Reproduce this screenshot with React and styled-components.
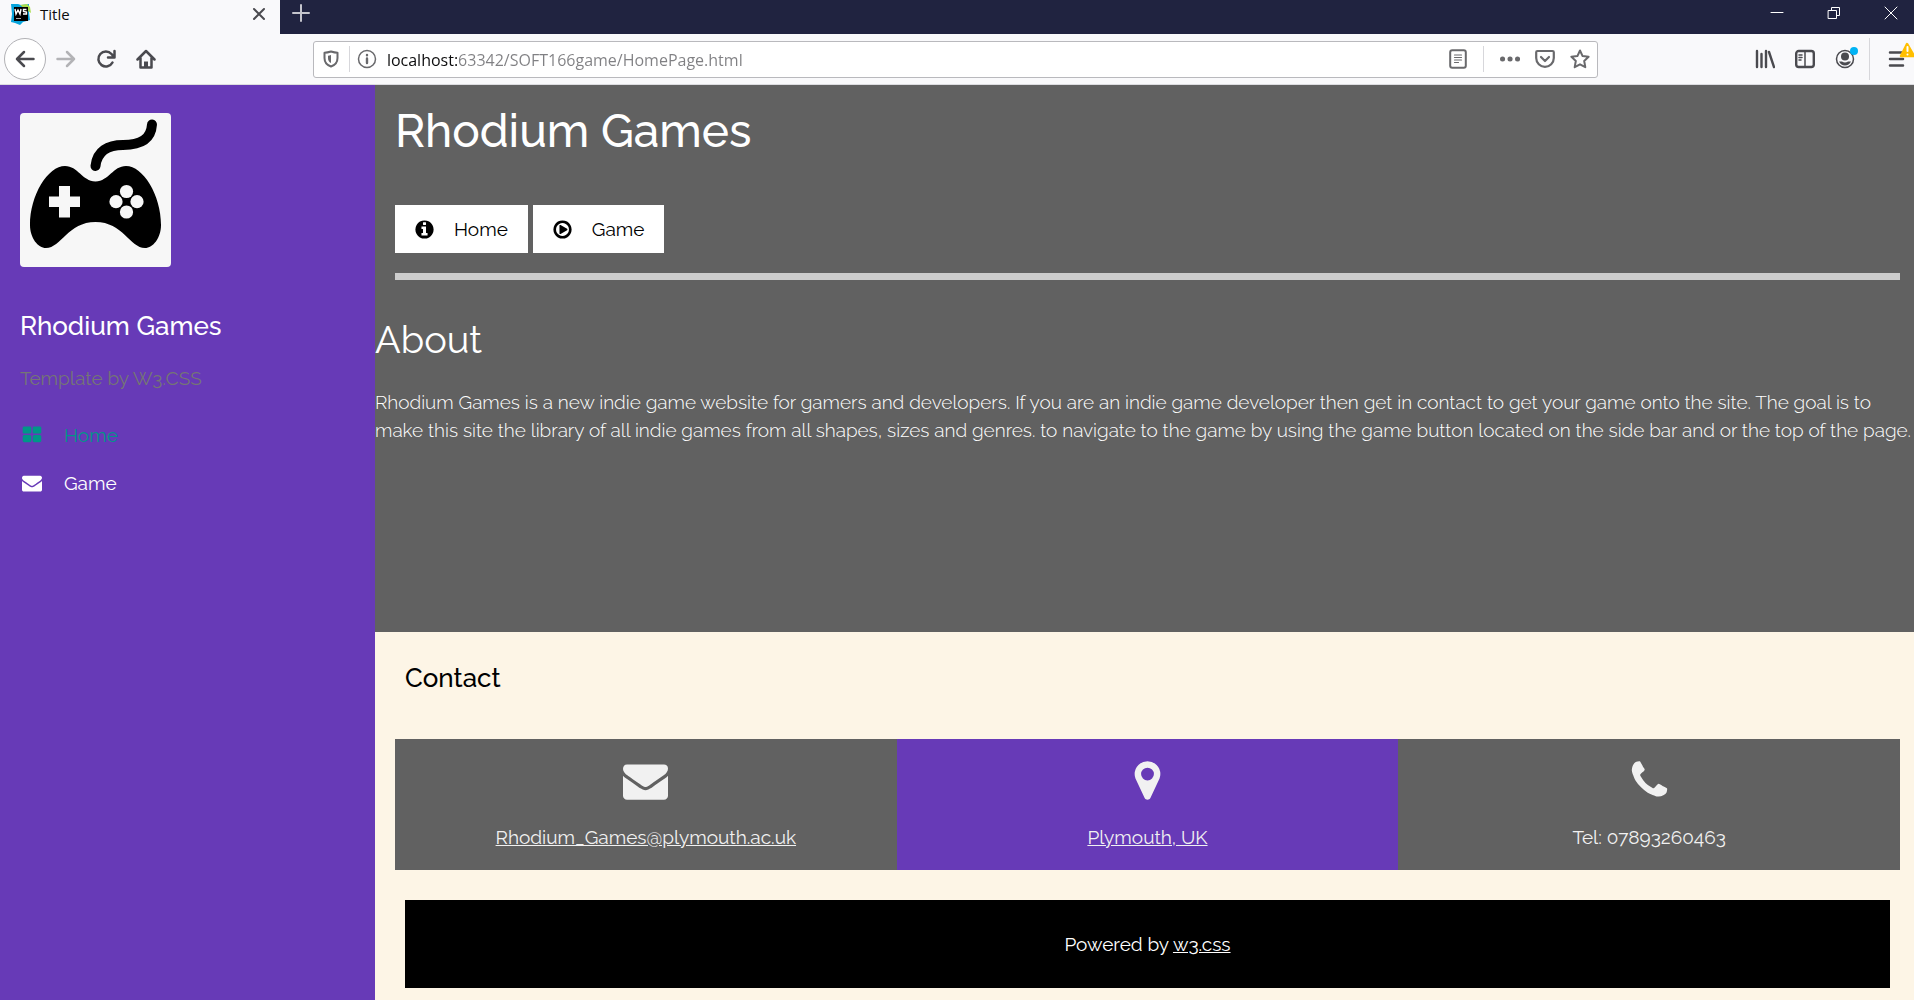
import React from 'react';
import styled, { createGlobalStyle } from 'styled-components';

const colors = {
  purple: '#673ab7',
  grey: '#616161',
  cream: '#fdf5e6',
  frame: '#202340',
  toolbar: '#f9f9fb',
  glyph: '#4a4a4f',
};

const GlobalStyle = createGlobalStyle`
  *, *::before, *::after { box-sizing: border-box; }
  body {
    margin: 0;
    font-family: Raleway, Lato, "Open Sans", sans-serif;
    font-size: 19px;
    font-variant-numeric: oldstyle-nums;
    line-height: 28px;
    color: #000;
    background: ${colors.cream};
  }
  h1, h2, h3, p { margin: 0; }
  svg { display: block; flex: none; }
`;

/* ---------- browser frame ---------- */

const Window = styled.div`
  display: flex;
  flex-direction: column;
  min-height: 100vh;
`;

const TitleBar = styled.header`
  display: flex;
  height: 34px;
  background: ${colors.frame};
  font-family: "Open Sans", "Noto Sans", sans-serif;
`;

const Tab = styled.div`
  display: flex;
  align-items: center;
  gap: 8px;
  width: 280px;
  padding: 0 10px 6px;
  background: ${colors.toolbar};
  color: #0c0c0d;
  font-size: 15px;
  line-height: 20px;
`;

const TabTitle = styled.span`
  flex: 1;
`;

const FrameButton = styled.button`
  display: flex;
  align-items: center;
  justify-content: center;
  width: ${(p) => p.$width}px;
  height: 26px;
  padding: 0;
  border: 0;
  background: none;
  color: ${(p) => p.$color || '#fff'};
`;

const WindowControls = styled.div`
  display: flex;
  margin-left: auto;
  gap: 11px;
`;

const NavBar = styled.nav`
  display: grid;
  grid-template-columns: auto 4fr 35fr 4fr auto;
  align-items: center;
  height: 51px;
  padding-left: 4px;
  background: ${colors.toolbar};
  border-bottom: 1px solid #dcdce0;
  font-family: "Open Sans", "Noto Sans", sans-serif;
`;

const ToolGroup = styled.div`
  display: flex;
  align-items: center;
`;

const ToolButton = styled.button`
  display: flex;
  align-items: center;
  justify-content: center;
  width: ${(p) => p.$width || 40}px;
  height: ${(p) => (p.$round ? 42 : 36)}px;
  padding: 0;
  border: ${(p) => (p.$round ? '1px solid #b1b1b5' : '0')};
  border-radius: ${(p) => (p.$round ? '50%' : '2px')};
  background: ${(p) => (p.$round ? '#fff' : 'none')};
  color: ${(p) => (p.$dim ? '#b3b3b6' : p.$soft ? '#69696c' : colors.glyph)};
`;

const Divider = styled.span`
  width: 1px;
  height: ${(p) => p.$height}px;
  margin: 0 ${(p) => p.$space || 0}px;
  background: #d7d7db;
`;

const AddressBar = styled.div`
  grid-column: 3;
  display: flex;
  align-items: center;
  height: 37px;
  border: 1px solid #b9b9bd;
  border-radius: 3px;
  background: #fff;
`;

const AddressInput = styled.input`
  flex: 1;
  min-width: 0;
  height: 32px;
  padding: 2px 2px 0;
  border: 0;
  outline: 0;
  font-family: inherit;
  font-size: 16px;
  color: #737373;
  background: linear-gradient(90deg, #0c0c0d 72px, #808083 72px);
  background-clip: text;
  -webkit-background-clip: text;
  -webkit-text-fill-color: transparent;
`;

const NavEnd = styled(ToolGroup)`
  grid-column: 5;
`;

/* ---------- page ---------- */

const Page = styled.div`
  flex: 1;
  display: grid;
  grid-template-columns: 375px 1fr;
`;

const Sidebar = styled.aside`
  padding: 28px 0;
  background: ${colors.purple};
  color: #fff;
`;

const Brand = styled.div`
  padding: 0 20px;
`;

const Logo = styled.svg`
  border-radius: 4px;
`;

const BrandName = styled.h3`
  margin-top: 40px;
  font-size: 26px;
  font-weight: 500;
  line-height: 38px;
`;

const Credit = styled.p`
  margin: 19px 0;
  color: #757575;
`;

const SideLink = styled.a`
  display: flex;
  align-items: center;
  gap: 22px;
  padding: 10px 22px;
  color: ${(p) => (p.$active ? '#009688' : '#fff')};
  text-decoration: none;
`;

const Main = styled.main`
  background: ${colors.cream};
`;

const Intro = styled.section`
  padding: 12px 0 188px;
  background: ${colors.grey};
  color: #fff;
`;

const PageHeader = styled.header`
  padding: 0 14px 0 20px;
`;

const PageTitle = styled.h1`
  font-size: 46px;
  font-weight: 500;
  line-height: 68px;
`;

const ButtonRow = styled.div`
  display: flex;
  gap: 5px;
  margin-top: 40px;
  padding-bottom: 20px;
  border-bottom: 7px solid #ccc;
  box-sizing: content-box;
`;

const PageButton = styled.button`
  display: flex;
  align-items: center;
  gap: 20px;
  padding: 10px 20px;
  border: 0;
  background: #fff;
  color: #000;
  font: inherit;
`;

const AboutTitle = styled.h2`
  margin-top: 32px;
  font-size: 38px;
  font-weight: 400;
  line-height: 56px;
`;

const AboutText = styled.p`
  margin-top: 20px;
  font-weight: 350;
`;

const ContactSection = styled.section`
  padding: 27px 14px 12px 20px;
`;

const ContactTitle = styled.h3`
  padding-left: 10px;
  font-size: 26px;
  font-weight: 500;
  line-height: 38px;
`;

const Cards = styled.div`
  display: grid;
  grid-template-columns: repeat(3, 1fr);
  margin-top: 42px;
`;

const Card = styled.div`
  display: flex;
  flex-direction: column;
  align-items: center;
  gap: 20px;
  padding: 19px;
  background: ${(p) => (p.$accent ? colors.purple : colors.grey)};
  color: #f1f1f1;
`;

const TextLink = styled.a`
  color: inherit;
`;

const PageFooter = styled.footer`
  margin: 30px 10px 0;
  padding: 30px 20px;
  background: #000;
  color: #fff;
  text-align: center;
`;

/* ---------- icons ---------- */

const ring =
  'm640 416q0 209-103 385.5t-279.5 279.5-385.5 103-385.5-103-279.5-279.5-103-385.5 103-385.5 279.5-279.5 385.5-103 385.5 103 279.5 279.5 103 385.5z';

const tile = (x, y) =>
  `M${x} ${y}v384q0 52-38 90t-90 38h-512q-52 0-90-38t-38-90v-384q0-52 38-90t90-38h512q52 0 90 38t38 90z`;

const glyphs = {
  envelope:
    'M1792 710v794q0 66-47 113t-113 47h-1472q-66 0-113-47t-47-113v-794q44 49 101 87 362 246 497 345 57 42 92.5 65.5t94.5 48 110 24.5h2q51 0 110-24.5t94.5-48 92.5-65.5q170-123 498-345 57-39 100-87zm0-294q0 79-49 151t-122 123q-376 261-468 325-10 7-42.5 31t-54 38.5-52 32.5-57.5 27-50 9h-2q-23 0-50-9t-57.5-27-52-32.5-54-38.5-42.5-31q-91-64-262-182.5t-205-142.5q-62-42-117-115.5t-55-136.5q0-78 41.5-130t118.5-52h1472q65 0 112.5 47t47.5 113z',
  phone:
    'M1600 1240q0 27-10 70.5t-21 68.5q-21 50-122 106-94 51-186 51-27 0-53-3.5t-57.5-12.5-47-14.5-55.5-20.5-49-18q-98-35-175-83-127-79-264-216t-216-264q-48-77-83-175-3-9-18-49t-20.5-55.5-14.5-47-12.5-57.5-3.5-53q0-92 51-186 56-101 106-122 25-11 68.5-21t70.5-10q14 0 21 3 18 6 53 76 11 19 30 54t35 63.5 31 53.5q3 4 17.5 25t21.5 35.5 7 28.5q0 20-28.5 50t-62 55-62 53-28.5 46q0 9 5 22.5t8.5 20.5 14 24 11.5 19q76 137 174 235t235 174q2 1 19 11.5t24 14 20.5 8.5 22.5 5q18 0 46-28.5t53-62 55-62 50-28.5q14 0 28.5 7t35.5 21.5 25 17.5q25 15 53.5 31t63.5 35 54 30q70 35 76 53 3 7 3 21z',
  marker:
    'M1152 640q0-106-75-181t-181-75-181 75-75 181 75 181 181 75 181-75 75-181zm256 0q0 109-33 179l-364 774q-16 33-47.5 52t-67.5 19-67.5-19-46.5-52l-365-774q-33-70-33-179 0-212 150-362t362-150 362 150 150 362z',
  info:
    'M1152 1376v-160q0-14-9-23t-23-9h-96v-512q0-14-9-23t-23-9h-320q-14 0-23 9t-9 23v160q0 14 9 23t23 9h96v320h-96q-14 0-23 9t-9 23v160q0 14 9 23t23 9h448q14 0 23-9t9-23zm-128-896v-160q0-14-9-23t-23-9h-192q-14 0-23 9t-9 23v160q0 14 9 23t23 9h192q14 0 23-9t9-23z' +
    ring,
  play:
    'M1312 896q0 37-32 55l-544 320q-15 9-32 9-16 0-32-8-32-19-32-56v-640q0-37 32-56 33-18 64 1l544 320q32 18 32 55zm128 0q0-148-73-273t-198-198-273-73-273 73-198 198-73 273 73 273 198 198 273 73 273-73 198-198 73-273z' +
    ring.replace('m640 416', 'm224 0'),
  tiles: tile(832, 1024) + tile(832, 256) + tile(1728, 1024) + tile(1728, 256),
};

const Glyph = ({ name, size, box = '0 0 1792 1792' }) => (
  <svg width={size} height={size} viewBox={box} fill="currentColor" aria-hidden="true">
    <path d={glyphs[name]} />
  </svg>
);

const Stroke = ({ w = 20, h = w, sw = 2, children }) => (
  <svg
    width={w}
    height={h}
    viewBox={`0 0 ${w} ${h}`}
    fill="none"
    stroke="currentColor"
    strokeWidth={sw}
    strokeLinecap="round"
    strokeLinejoin="round"
    aria-hidden="true"
  >
    {children}
  </svg>
);

const Favicon = () => (
  <svg width="22" height="22" viewBox="0 0 22 22" aria-hidden="true">
    <path d="M1 1h7l3 1 8-1v8l1 8-7 2-3 3-5-2-4-1 1-8z" fill="#07a4dc" />
    <path d="M10 2l7-1 3 3 1 6-6-4z" fill="#a8dc4c" />
    <path d="M4 4h14v14H4z" fill="#000" />
    <path d="M5 6l1 5 2-4 2 4 1-5M16.500 6.500h-3v2l3 .5v2h-3.500" fill="none" stroke="#fff" strokeWidth="1.400" />
    <path d="M6 15.500h5" stroke="#aaa" strokeWidth="1" />
  </svg>
);

const Gamepad = () => (
  <Logo width="151" height="154" viewBox="0 0 151 154" role="img" aria-label="Rhodium Games logo">
    <rect width="151" height="154" fill="#f7f7f7" />
    <path
      d="M75.500 53C77 38 88 32 103 32C121 32 131 26 132 11.500"
      fill="none"
      stroke="#000"
      strokeWidth="10"
      strokeLinecap="round"
    />
    <path d="M45 53C58 53 62 68 75.500 68.500C89 68 93 53 106 53C123 53 141 82 141 112C141 125 133 135 125 135C110 135 103 109 75.500 109C48 109 41 135 26 135C18 135 10 125 10 112C10 82 28 53 45 53z" />
    <g fill="#f7f7f7">
      <path d="M39 73h11v10.500h10v10.500H50v10.500H39V94H29V83.500h10z" />
      <circle cx="106.500" cy="78.500" r="6.600" />
      <circle cx="96" cy="88.700" r="6.600" />
      <circle cx="117" cy="88.700" r="6.600" />
      <circle cx="106.500" cy="99" r="6.600" />
    </g>
  </Logo>
);

/* ---------- sections ---------- */

const BrowserFrame = () => (
  <>
    <TitleBar>
      <Tab>
        <Favicon />
        <TabTitle>Title</TabTitle>
        <FrameButton $width={22} $color={colors.glyph} aria-label="Close tab">
          <Stroke w={14}><path d="M2 2l10 10M12 2L2 12" /></Stroke>
        </FrameButton>
      </Tab>
      <FrameButton $width={42} $color="#c4c4cc" aria-label="New tab">
        <Stroke w={18}><path d="M9 1v16M1 9h16" /></Stroke>
      </FrameButton>
      <WindowControls>
        <FrameButton $width={46} aria-label="Minimize">
          <Stroke w={14} sw={1}><path d="M1 6.500h12" /></Stroke>
        </FrameButton>
        <FrameButton $width={46} aria-label="Restore">
          <Stroke w={14} sw={1}><path d="M1.500 4.500h8v8h-8zM4.500 4V1.500h8v8H10" /></Stroke>
        </FrameButton>
        <FrameButton $width={46} aria-label="Close window">
          <Stroke w={14} sw={1}><path d="M1 1l12 12M13 1L1 13" /></Stroke>
        </FrameButton>
      </WindowControls>
    </TitleBar>
    <NavBar aria-label="Browser toolbar">
      <ToolGroup>
        <ToolButton $round $width={42} aria-label="Back">
          <Stroke sw={2.5}><path d="M18.500 10H2M9 3l-7 7 7 7" /></Stroke>
        </ToolButton>
        <ToolButton $dim aria-label="Forward">
          <Stroke sw={2.5}><path d="M1.500 10H18M11 3l7 7-7 7" /></Stroke>
        </ToolButton>
        <ToolButton aria-label="Reload">
          <Stroke sw={2.5}><path d="M16.500 13.500A7.500 7.500 0 1 1 15.500 5L18 8M18.500 2v6.500H12" /></Stroke>
        </ToolButton>
        <ToolButton aria-label="Home page">
          <Stroke sw={2.500}><path d="M1.500 10.500L10 2l8.500 8.500M4.500 9v9.500h11V9" /><path d="M10 18v-5.500" strokeWidth="4" strokeLinecap="butt" /></Stroke>
        </ToolButton>
      </ToolGroup>
      <AddressBar>
        <ToolButton $soft $width={35} aria-label="Tracking protection">
          <Stroke w={18}><path d="M9 1.500c2.500.8 4.500 1.200 6.500 1.200V8c0 4-2 7-6.500 8.500C4.500 15 2.500 12 2.500 8V2.700C4.500 2.700 6.500 2.300 9 1.500z" /><path d="M9 5c-1 .4-2 .6-3 .7V8c0 2.500 1 4 3 5z" fill="currentColor" stroke="none" /></Stroke>
        </ToolButton>
        <Divider $height={26} />
        <ToolButton $soft $width={35} aria-label="Site information">
          <Stroke sw={1.500}><circle cx="10" cy="10" r="8.500" /><path d="M10 9.500v4.500M10 6v.2" strokeWidth="2.400" /></Stroke>
        </ToolButton>
        <AddressInput aria-label="Address" defaultValue="localhost:63342/SOFT166game/HomePage.html" />
        <ToolButton $soft $width={35} aria-label="Reader view">
          <Stroke w={18} h={20}><rect x="1.200" y="1.200" width="15.600" height="17.600" rx="2" /><path d="M5.500 6h7M5.500 8.500h7M5.500 11h7M5.500 13.500h4" strokeWidth="1.200" /></Stroke>
        </ToolButton>
        <Divider $height={26} $space={8} />
        <ToolButton $soft $width={35} aria-label="Page actions">
          <Stroke><path d="M2.500 10h.1M10 10h.1M17.500 10h.1" strokeWidth="5" /></Stroke>
        </ToolButton>
        <ToolButton $soft $width={35} aria-label="Save to Pocket">
          <Stroke sw={2.200}><path d="M2.500 2h15q1.300 0 1.300 1.300V9a8.800 8.800 0 0 1-17.600 0V3.300Q1.200 2 2.500 2z" /><path d="M6 8l4 4 4-4" /></Stroke>
        </ToolButton>
        <ToolButton $soft $width={35} aria-label="Bookmark">
          <Stroke><path d="M10 1.500l2.600 5.600 6 .7-4.400 4.200 1.100 6.200L10 15.300l-5.300 2.900L5.800 12 1.400 7.800l6-.7z" /></Stroke>
        </ToolButton>
      </AddressBar>
      <NavEnd>
        <ToolButton aria-label="Library">
          <Stroke sw={2.400}><path d="M2 2v16M6.500 5v13M11 2v16M14 3l5 15" /></Stroke>
        </ToolButton>
        <ToolButton aria-label="Sidebars">
          <Stroke sw={2.400}><rect x="1.200" y="2" width="17.600" height="16" rx="2.500" /><path d="M10 2v16M4 6h3M4 8.500h3M4 11h2" strokeWidth="1.500" /></Stroke>
        </ToolButton>
        <ToolButton aria-label="Account">
          <Stroke w={26} h={24} sw={1.500}><circle cx="13" cy="12" r="8.500" /><g fill="currentColor" stroke="none"><circle cx="13" cy="9.500" r="4" /><path d="M7 14.500h3q3 2 6 0h3q-2 4-6 4t-6-4z" /></g><circle cx="22" cy="4" r="4" fill="#00b3f4" stroke="none" /></Stroke>
        </ToolButton>
        <Divider $height={42} $space={4} />
        <ToolButton aria-label="Menu">
          <Stroke w={40} h={36} sw={2.500}><path d="M16 11.500h13M16 18h13M16 24.500h13" /><path d="M33 3l7 12H27z" fill="#ffbf00" stroke="#ffbf00" /><path d="M33.500 6v4M33.500 13.500v.1" stroke="#fff" strokeWidth="2" /></Stroke>
        </ToolButton>
      </NavEnd>
    </NavBar>
  </>
);

export default function App() {
  return (
    <Window>
      <GlobalStyle />
      <BrowserFrame />
      <Page>
        <Sidebar>
          <Brand>
            <Gamepad />
            <BrandName>Rhodium Games</BrandName>
            <Credit>Template by W3.CSS</Credit>
          </Brand>
          <SideLink href="#home" $active><Glyph name="tiles" size={20} />Home</SideLink>
          <SideLink href="#game"><Glyph name="envelope" size={20} />Game</SideLink>
        </Sidebar>
        <Main>
          <Intro>
            <PageHeader>
              <PageTitle>Rhodium Games</PageTitle>
              <ButtonRow>
                <PageButton><Glyph name="info" size={19} box="96 96 1600 1600" />Home</PageButton>
                <PageButton><Glyph name="play" size={19} box="96 96 1600 1600" />Game</PageButton>
              </ButtonRow>
            </PageHeader>
            <AboutTitle>About</AboutTitle>
            <AboutText>
              Rhodium Games is a new indie game website for gamers and developers. If you are an indie game
              developer then get in contact to get your game onto the site. The goal is to make this site the
              library of all indie games from all shapes, sizes and genres. to navigate to the game by using the
              game button located on the side bar and or the top of the page.
            </AboutText>
          </Intro>
          <ContactSection>
            <ContactTitle>Contact</ContactTitle>
            <Cards>
              <Card>
                <Glyph name="envelope" size={45} />
                <TextLink href="mailto:Rhodium_Games@plymouth.ac.uk">Rhodium_Games@plymouth.ac.uk</TextLink>
              </Card>
              <Card $accent>
                <Glyph name="marker" size={45} />
                <TextLink href="#map">Plymouth, UK</TextLink>
              </Card>
              <Card>
                <Glyph name="phone" size={45} />
                <p>Tel: 07893260463</p>
              </Card>
            </Cards>
            <PageFooter>
              Powered by <TextLink href="#w3css">w3.css</TextLink>
            </PageFooter>
          </ContactSection>
        </Main>
      </Page>
    </Window>
  );
}
